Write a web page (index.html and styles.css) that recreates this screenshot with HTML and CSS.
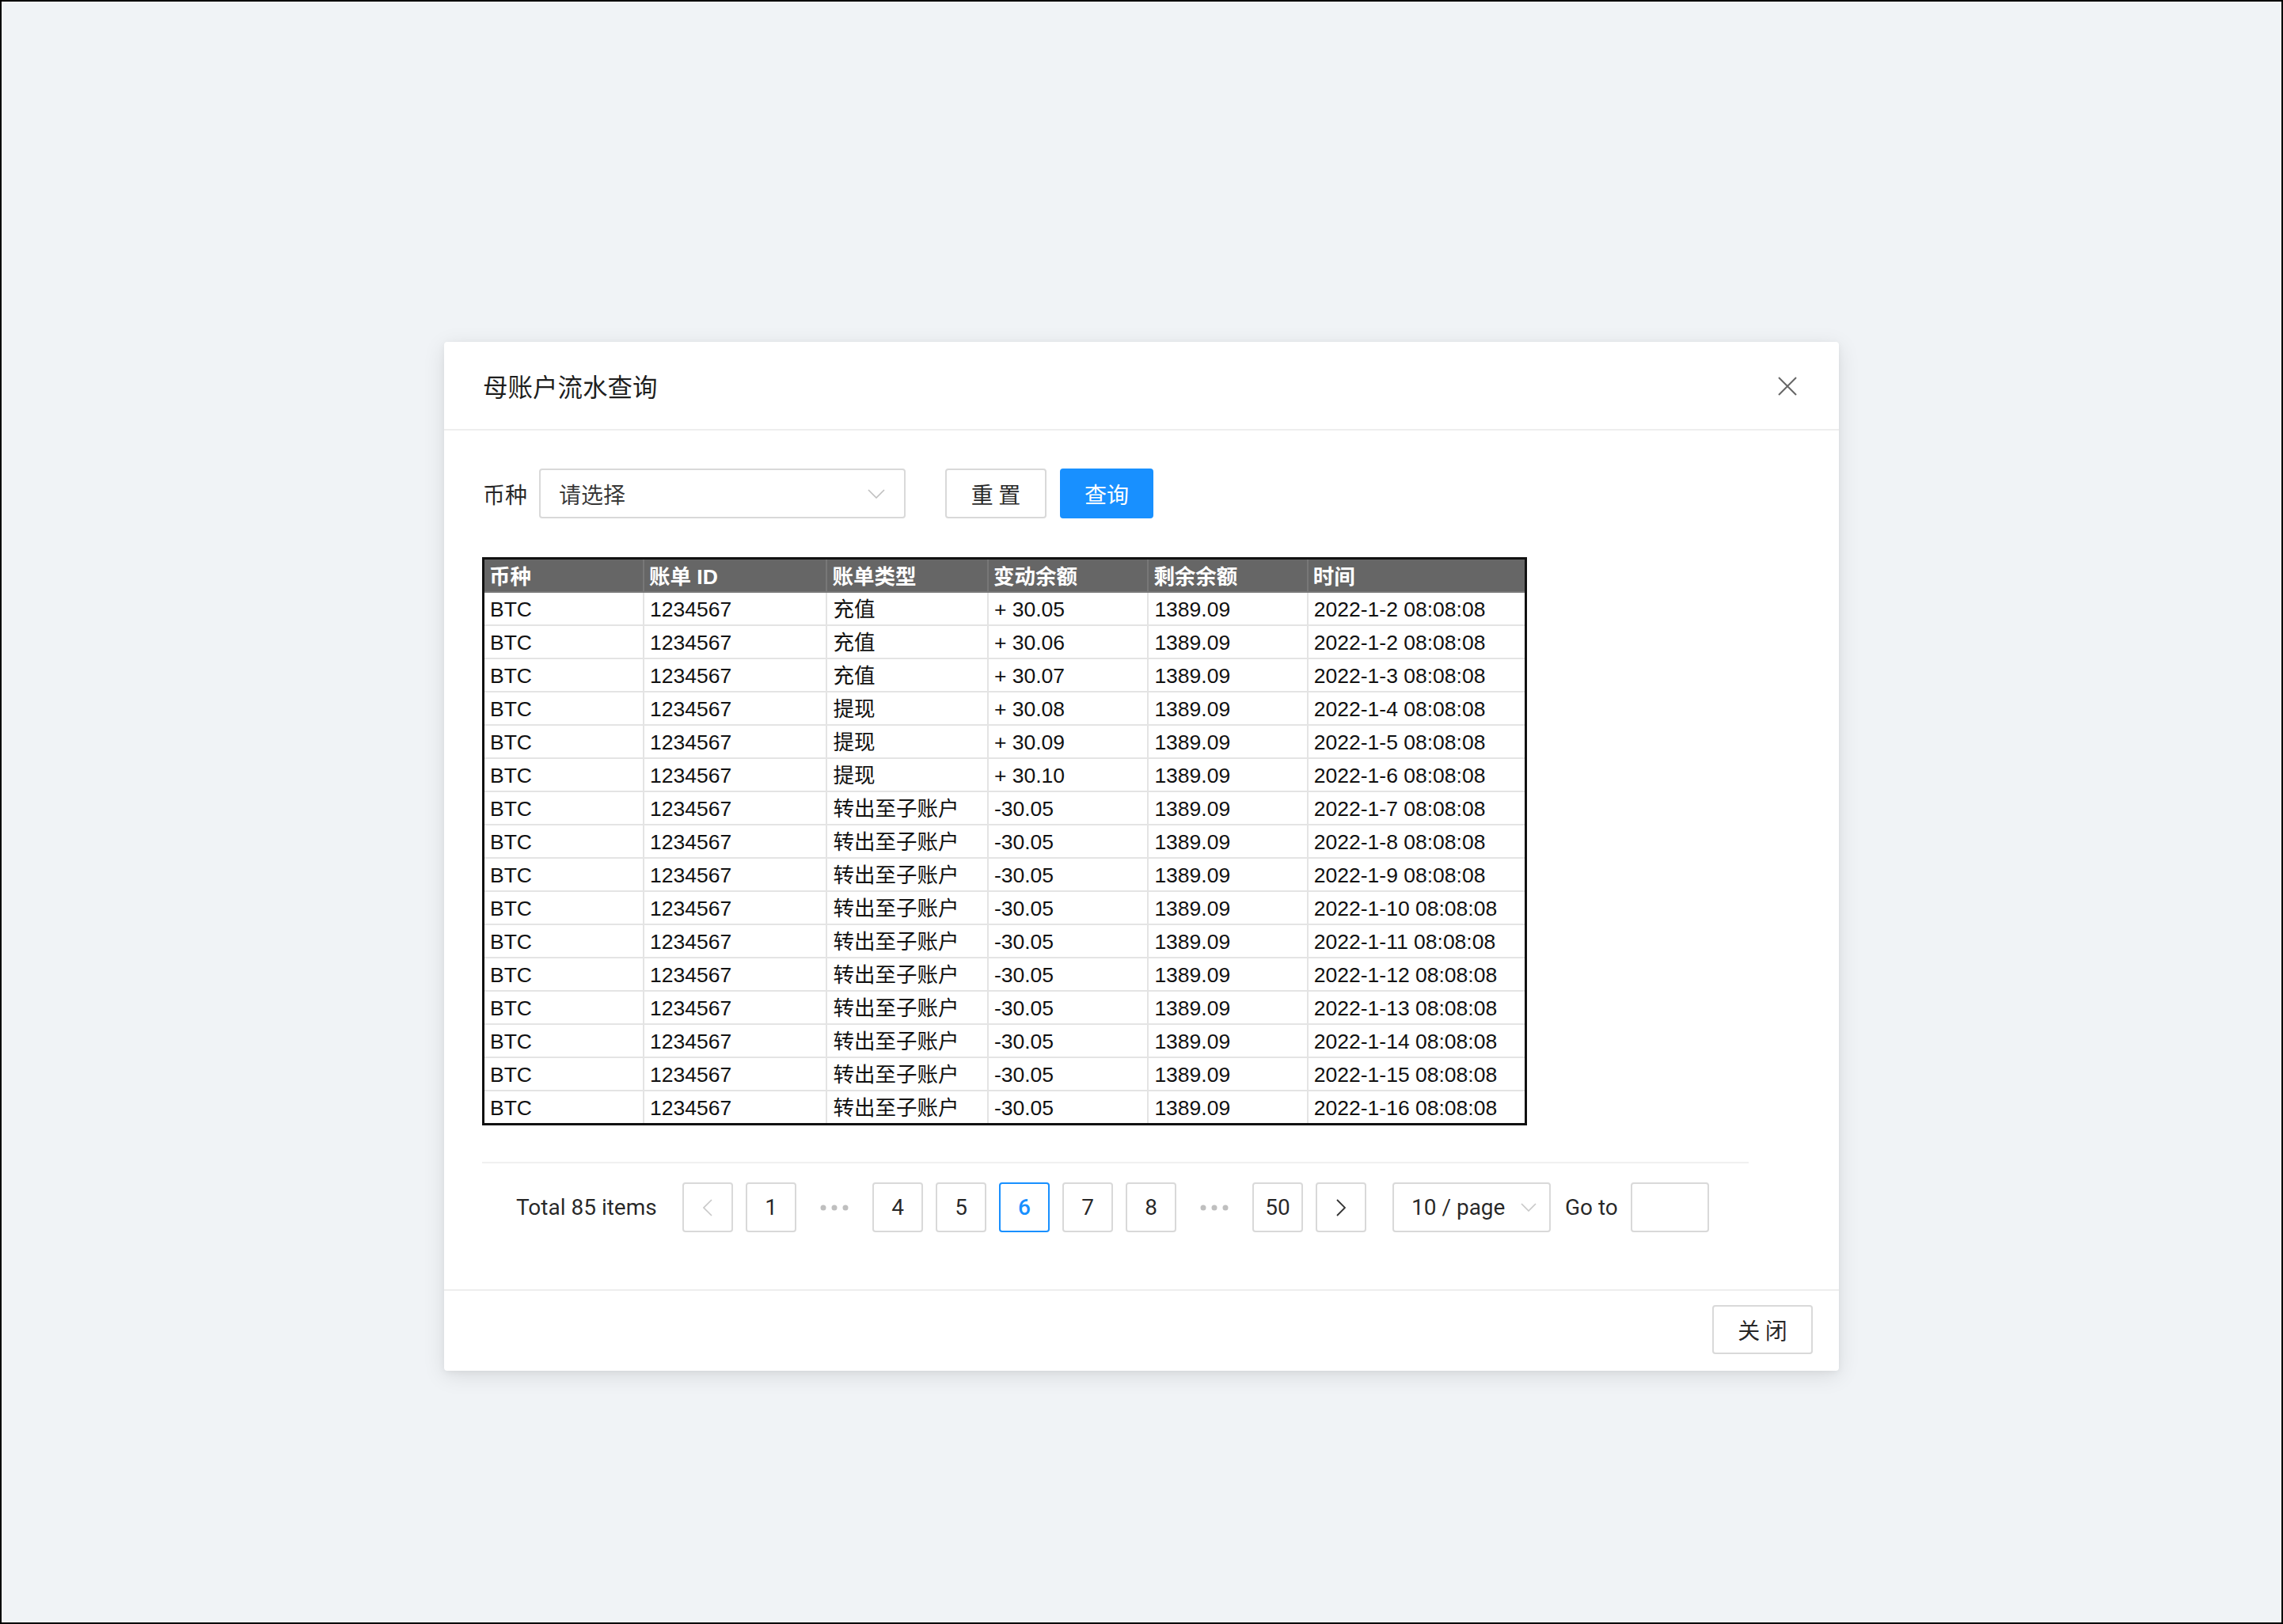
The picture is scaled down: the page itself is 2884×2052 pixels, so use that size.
FILE: index.html
```html
<!DOCTYPE html>
<html lang="zh-CN">
<head>
<meta charset="utf-8">
<title>母账户流水查询</title>
<link rel="stylesheet" href="styles.css">
</head>
<body>
<div class="frame">
  <div class="modal">
    <div class="modal-header">
      <div class="modal-title">母账户流水查询</div>
      <button class="close-btn" aria-label="close">
        <svg width="26" height="26" viewBox="0 0 26 26"><path d="M2 2 L24 24 M24 2 L2 24" stroke="#666" stroke-width="2" fill="none"/></svg>
      </button>
    </div>
    <div class="modal-body">
      <div class="filter-row">
        <span class="filter-label">币种</span>
        <div class="select">
          <span class="select-placeholder">请选择</span>
          <svg class="select-arrow" width="22" height="12" viewBox="0 0 22 12"><path d="M1 1 L11 11 L21 1" stroke="#bfbfbf" stroke-width="1.6" fill="none"/></svg>
        </div>
        <button class="btn btn-default btn-reset">重 置</button>
        <button class="btn btn-primary">查询</button>
      </div>

      <table class="ledger">
        <colgroup>
          <col class="c1"><col class="c2"><col class="c3"><col class="c4"><col class="c5"><col class="c6">
        </colgroup>
        <thead>
          <tr><th>币种</th><th>账单 ID</th><th>账单类型</th><th>变动余额</th><th>剩余余额</th><th>时间</th></tr>
        </thead>
        <tbody>
          <tr><td>BTC</td><td>1234567</td><td>充值</td><td>+ 30.05</td><td>1389.09</td><td>2022-1-2 08:08:08</td></tr>
          <tr><td>BTC</td><td>1234567</td><td>充值</td><td>+ 30.06</td><td>1389.09</td><td>2022-1-2 08:08:08</td></tr>
          <tr><td>BTC</td><td>1234567</td><td>充值</td><td>+ 30.07</td><td>1389.09</td><td>2022-1-3 08:08:08</td></tr>
          <tr><td>BTC</td><td>1234567</td><td>提现</td><td>+ 30.08</td><td>1389.09</td><td>2022-1-4 08:08:08</td></tr>
          <tr><td>BTC</td><td>1234567</td><td>提现</td><td>+ 30.09</td><td>1389.09</td><td>2022-1-5 08:08:08</td></tr>
          <tr><td>BTC</td><td>1234567</td><td>提现</td><td>+ 30.10</td><td>1389.09</td><td>2022-1-6 08:08:08</td></tr>
          <tr><td>BTC</td><td>1234567</td><td>转出至子账户</td><td>-30.05</td><td>1389.09</td><td>2022-1-7 08:08:08</td></tr>
          <tr><td>BTC</td><td>1234567</td><td>转出至子账户</td><td>-30.05</td><td>1389.09</td><td>2022-1-8 08:08:08</td></tr>
          <tr><td>BTC</td><td>1234567</td><td>转出至子账户</td><td>-30.05</td><td>1389.09</td><td>2022-1-9 08:08:08</td></tr>
          <tr><td>BTC</td><td>1234567</td><td>转出至子账户</td><td>-30.05</td><td>1389.09</td><td>2022-1-10 08:08:08</td></tr>
          <tr><td>BTC</td><td>1234567</td><td>转出至子账户</td><td>-30.05</td><td>1389.09</td><td>2022-1-11 08:08:08</td></tr>
          <tr><td>BTC</td><td>1234567</td><td>转出至子账户</td><td>-30.05</td><td>1389.09</td><td>2022-1-12 08:08:08</td></tr>
          <tr><td>BTC</td><td>1234567</td><td>转出至子账户</td><td>-30.05</td><td>1389.09</td><td>2022-1-13 08:08:08</td></tr>
          <tr><td>BTC</td><td>1234567</td><td>转出至子账户</td><td>-30.05</td><td>1389.09</td><td>2022-1-14 08:08:08</td></tr>
          <tr><td>BTC</td><td>1234567</td><td>转出至子账户</td><td>-30.05</td><td>1389.09</td><td>2022-1-15 08:08:08</td></tr>
          <tr><td>BTC</td><td>1234567</td><td>转出至子账户</td><td>-30.05</td><td>1389.09</td><td>2022-1-16 08:08:08</td></tr>
        </tbody>
      </table>

      <div class="pager-divider"></div>

      <div class="pagination">
        <span class="total">Total 85 items</span>
        <span class="page-item disabled">
          <svg width="12" height="22" viewBox="0 0 12 22"><path d="M11 1 L1 11 L11 21" stroke="#c8c8c8" stroke-width="1.6" fill="none"/></svg>
        </span>
        <span class="page-item">1</span>
        <span class="page-ellipsis"><svg width="36" height="8" viewBox="0 0 36 8"><circle cx="4" cy="4" r="3.5" fill="#bfbfbf"/><circle cx="18" cy="4" r="3.5" fill="#bfbfbf"/><circle cx="32" cy="4" r="3.5" fill="#bfbfbf"/></svg></span>
        <span class="page-item">4</span>
        <span class="page-item">5</span>
        <span class="page-item active">6</span>
        <span class="page-item">7</span>
        <span class="page-item">8</span>
        <span class="page-ellipsis"><svg width="36" height="8" viewBox="0 0 36 8"><circle cx="4" cy="4" r="3.5" fill="#bfbfbf"/><circle cx="18" cy="4" r="3.5" fill="#bfbfbf"/><circle cx="32" cy="4" r="3.5" fill="#bfbfbf"/></svg></span>
        <span class="page-item">50</span>
        <span class="page-item">
          <svg width="12" height="22" viewBox="0 0 12 22"><path d="M1 1 L11 11 L1 21" stroke="#333" stroke-width="1.8" fill="none"/></svg>
        </span>
        <span class="size-select">
          <span>10 / page</span>
          <svg width="20" height="11" viewBox="0 0 20 11"><path d="M1 1 L10 10 L19 1" stroke="#c8c8c8" stroke-width="1.6" fill="none"/></svg>
        </span>
        <span class="goto-label">Go to</span>
        <span class="goto-input"></span>
      </div>
    </div>
    <div class="modal-footer">
      <button class="btn btn-default btn-close">关 闭</button>
    </div>
  </div>
</div>
</body>
</html>
```

FILE: styles.css
```css
html, body {
  margin: 0;
  padding: 0;
}

body {
  font-family: Roboto, "Noto Sans CJK SC", sans-serif;
  color: rgba(0, 0, 0, 0.85);
}

.frame {
  width: 2884px;
  height: 2052px;
  box-sizing: border-box;
  border: 2px solid #000;
  background: #f0f3f6;
  overflow: hidden;
  padding-top: 430px;
}

.modal {
  width: 1762px;
  height: 1300px;
  margin: 0 auto;
  background: #fff;
  border-radius: 4px;
  box-shadow: 0 6px 28px rgba(0, 0, 0, 0.10), 0 2px 8px rgba(0, 0, 0, 0.05);
  display: flex;
  flex-direction: column;
  box-sizing: border-box;
}

.modal-header {
  height: 110px;
  border-bottom: 2px solid #eeeeee;
  display: flex;
  align-items: center;
  justify-content: space-between;
  padding: 0 52px 0 49px;
  flex: none;
}

.modal-title {
  font-family: "Noto Sans CJK SC", sans-serif;
  font-size: 31.5px;
  color: rgba(0, 0, 0, 0.88);
}

.close-btn {
  background: none;
  border: none;
  padding: 0;
  width: 26px;
  height: 26px;
  display: flex;
  margin-top: 2px;
}

.modal-body {
  flex: 1;
  padding: 48px 48px 0 48px;
}

.filter-row {
  display: flex;
  align-items: center;
  height: 63px;
}

.filter-label {
  font-family: "Noto Sans CJK SC", sans-serif;
  font-size: 28px;
  color: rgba(0, 0, 0, 0.85);
  margin-left: 1px;
  width: 71px;
}

.select {
  width: 463px;
  height: 63px;
  box-sizing: border-box;
  border: 2px solid #d9d9d9;
  border-radius: 4px;
  display: flex;
  align-items: center;
  justify-content: space-between;
  padding: 0 24px 0 23px;
}

.select-placeholder {
  font-family: "Noto Sans CJK SC", sans-serif;
  font-size: 28px;
  color: rgba(0, 0, 0, 0.78);
}

.btn {
  height: 63px;
  box-sizing: border-box;
  border-radius: 4px;
  font-family: "Noto Sans CJK SC", sans-serif;
  font-size: 28px;
  padding: 0;
  cursor: pointer;
}

.btn-default {
  background: #fff;
  border: 2px solid #d9d9d9;
  color: rgba(0, 0, 0, 0.85);
}

.btn-reset {
  width: 128px;
  margin-left: 50px;
}

.btn-primary {
  width: 118px;
  margin-left: 17px;
  background: #1890ff;
  border: 2px solid #1890ff;
  color: #fff;
}

.ledger {
  margin-top: 49px;
  width: 1320px;
  table-layout: fixed;
  border-collapse: collapse;
  border: 3px solid #111;
  font-family: "Liberation Sans", Arial, "Noto Sans CJK SC", sans-serif;
  font-size: 26.5px;
  color: #111;
}

.ledger .c1 { width: 202px; }
.ledger .c2 { width: 231px; }
.ledger .c3 { width: 203px; }
.ledger .c4 { width: 202px; }
.ledger .c5 { width: 201px; }
.ledger .c6 { width: 275px; }

.ledger th {
  background: #666;
  color: #fff;
  font-weight: bold;
  text-align: left;
  height: 37px;
  line-height: 36px;
  padding: 3px 6px 0 6px;
  border: 2px solid #777;
  border-top: none;
}

.ledger td {
  height: 36px;
  line-height: 36px;
  padding: 3px 7px 1px 7px;
  border: 2px solid #e4e4e4;
  white-space: nowrap;
  overflow: hidden;
}

.ledger tbody tr:last-child td {
  border-bottom: none;
}

.pager-divider {
  margin-top: 46px;
  width: 1600px;
  height: 2px;
  background: #f0f0f0;
}

.pagination {
  display: flex;
  align-items: center;
  gap: 16px;
  margin-top: 24px;
  padding-left: 43px;
  height: 63px;
  font-family: Roboto, sans-serif;
  font-size: 28px;
  color: rgba(0, 0, 0, 0.85);
}

.total {
  width: 176px;
  white-space: nowrap;
  margin-right: 18px;
}

.page-item {
  width: 64px;
  height: 63px;
  box-sizing: border-box;
  border: 2px solid #d9d9d9;
  border-radius: 4px;
  display: flex;
  align-items: center;
  justify-content: center;
}

.page-item.active {
  border-color: #1890ff;
  color: #1890ff;
  font-weight: 500;
}

.page-ellipsis {
  width: 64px;
  display: flex;
  align-items: center;
  justify-content: center;
}

.size-select {
  margin-left: 17px;
  width: 200px;
  height: 63px;
  box-sizing: border-box;
  border: 2px solid #d9d9d9;
  border-radius: 4px;
  display: flex;
  align-items: center;
  justify-content: space-between;
  padding: 0 16px 0 22px;
}

.goto-label {
  margin-left: 2px;
  white-space: nowrap;
}

.goto-input {
  width: 99px;
  height: 63px;
  box-sizing: border-box;
  border: 2px solid #d9d9d9;
  border-radius: 4px;
}

.modal-footer {
  flex: none;
  border-top: 2px solid #eeeeee;
  height: 103px;
  box-sizing: border-box;
  display: flex;
  justify-content: flex-end;
  align-items: flex-start;
  padding: 18px 33px 0 0;
}

.btn-close {
  width: 127px;
  height: 62px;
}
```
